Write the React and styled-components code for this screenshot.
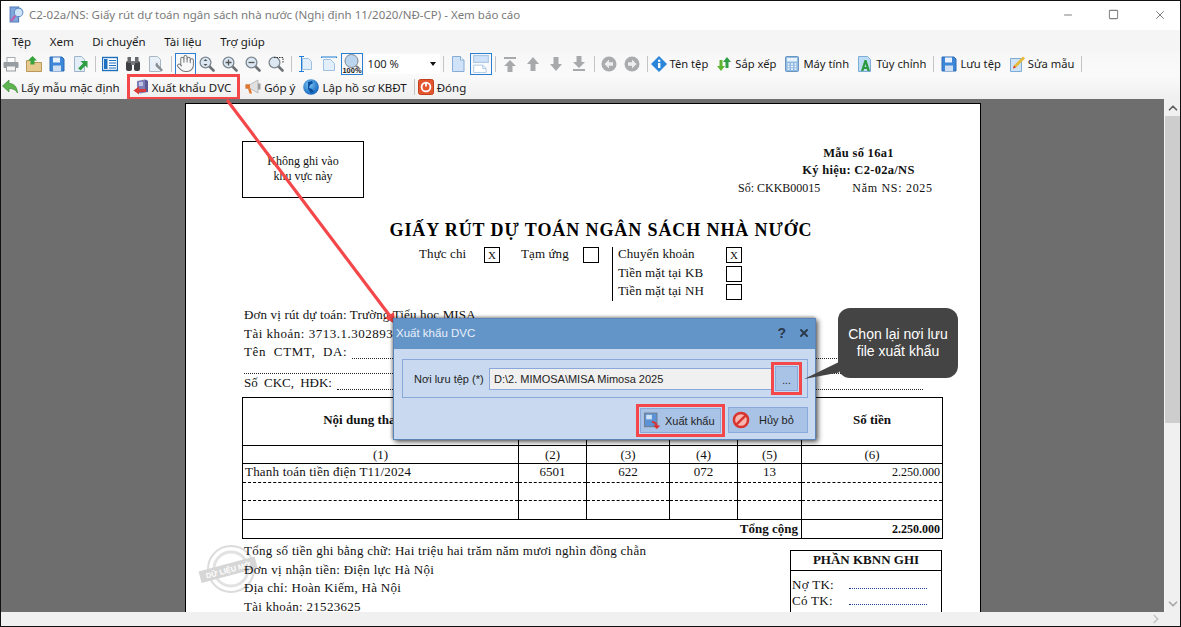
import React from 'react';
import styled, { createGlobalStyle } from 'styled-components';
import { Hand, ChevronUp, ChevronDown, ChevronRight, Minus, Square, X } from 'lucide-react';

const Svg = styled.svg.attrs((p) => ({ viewBox: p.viewBox || '0 0 16 16' }))`
  width: ${(p) => p.$size || 16}px;
  height: ${(p) => p.$size || 16}px;
  flex: none;
  display: block;
`;

const PrinterIcon = () => (
  <Svg>
    <rect x="4" y="1.500" width="8" height="5" fill="#fff" stroke="#a6abb0" />
    <rect x="0.500" y="6" width="15" height="6" rx="1" fill="#989da2" />
    <rect x="3.500" y="10" width="9" height="5" fill="#f4f4f4" stroke="#989da2" />
  </Svg>
);

const FolderUpIcon = () => (
  <Svg>
    <path d="M.5 4.500h5l1 2h9v9H.5z" fill="#e6c98c" stroke="#b9985a" />
    <path d="M6.500 0L11 4.500H8.500v4h-4v-4H2z" fill="#36a33c" />
  </Svg>
);

const SaveIcon = () => (
  <Svg>
    <path d="M1 1h12l2 2v12H1z" fill="#3d86d8" stroke="#2d6db8" />
    <rect x="4" y="1.500" width="7" height="5" fill="#eaf2fb" />
    <rect x="4" y="9.500" width="8" height="5.500" fill="#cfe0f3" />
  </Svg>
);

const ExportPageIcon = () => (
  <Svg>
    <path d="M2.500.5h7l3 3v12h-10z" fill="#e4eef8" stroke="#9db4cc" />
    <path d="M15.500 5v7l-2.200-2.200-4.800 4.800-2.300-2.300 4.800-4.800L8.500 5z" fill="#2f9e44" />
  </Svg>
);

const ListBookIcon = () => (
  <Svg>
    <rect x="0.500" y="1.500" width="15" height="13" fill="#fff" stroke="#1f6fbf" strokeWidth="1.400" />
    <rect x="2" y="3" width="3.500" height="10" fill="#1f6fbf" />
    <path d="M7 4.500h7M7 7h7M7 9.500h7M7 12h7" stroke="#1f6fbf" />
  </Svg>
);

const BinocularsIcon = () => (
  <Svg>
    <rect x="1" y="5" width="6" height="10" rx="2" fill="#3d3f42" />
    <rect x="9" y="5" width="6" height="10" rx="2" fill="#3d3f42" />
    <rect x="2.500" y="1" width="3.500" height="6" fill="#67696c" />
    <rect x="10" y="1" width="3.500" height="6" fill="#67696c" />
    <rect x="6" y="5" width="4" height="4" fill="#77797c" />
  </Svg>
);

const DocToolIcon = () => (
  <Svg>
    <path d="M1.500.5h8l3 3v12h-11z" fill="#e9f0f7" stroke="#a8b6c4" />
    <path d="M9 6.500a3 3 0 0 0-1 4l5.500 5 1.500-1.500-5-5.500a3 3 0 0 0-1-2z" fill="#8a8f94" />
  </Svg>
);

const Magnifier = ({ children }) => (
  <Svg>
    <path d="M10 10l4.500 4.500" stroke="#6f7275" strokeWidth="2.600" strokeLinecap="round" />
    <circle cx="6.500" cy="6.500" r="5.400" fill="#dbe8f3" stroke="#7d8790" strokeWidth="1.300" />
    {children}
  </Svg>
);

const FitHeightIcon = () => (
  <Svg>
    <path d="M4.500 2.500h6l3 3v8h-9z" fill="#e2eefa" stroke="#9fc0df" />
    <path d="M1 .5h5M1 15.500h5M3.500 1v14" stroke="#1c7ed6" />
  </Svg>
);

const FitWidthIcon = () => (
  <Svg>
    <path d="M2.500 3.500h7l4 4v7h-11z" fill="#e2eefa" stroke="#9fc0df" />
    <path d="M.5 2V.5M15.500 2V.5M1 1h14" stroke="#1c7ed6" />
  </Svg>
);

const ActualSizeIcon = () => (
  <Svg $size={20} viewBox="0 0 20 20">
    <circle cx="9.500" cy="7" r="6.500" fill="#bcd5ee" stroke="#7d8790" />
    <path d="M14 12l3 2" stroke="#6f7275" strokeWidth="2" />
    <text x="10" y="19" textAnchor="middle" fontSize="7.500" fontWeight="700" fontFamily="Liberation Sans, sans-serif" fill="#222">100%</text>
  </Svg>
);

const SinglePageIcon = () => (
  <Svg>
    <path d="M2.500.5h8l3.500 3.500v11.500H2.500z" fill="#cfe2f7" stroke="#88add4" />
    <path d="M10.500.5V4H14" fill="#fff" stroke="#88add4" />
  </Svg>
);

const TwoPagesIcon = () => (
  <Svg $size={18}>
    <rect x="1.500" y="0.500" width="13" height="6" fill="#cfe2f7" stroke="#a8c6e4" />
    <path d="M1.500 9h8l3 3v3.500h-11zM9.500 9v3h3" fill="#fff" stroke="#a8c6e4" strokeWidth=".8" />
  </Svg>
);

const NavArrow = ({ d }) => (
  <Svg>
    <path d={d} fill="#a7a9ab" />
  </Svg>
);

const NavCircle = ({ flip }) => (
  <Svg>
    <circle cx="8" cy="8" r="7.500" fill="#a9abad" />
    <path d={flip ? 'M8 3.500L12.500 8 8 12.500V9.800H4V6.200h4z' : 'M8 3.500L3.500 8 8 12.500V9.800h4V6.200H8z'} fill="#eee" />
  </Svg>
);

const InfoIcon = () => (
  <Svg>
    <path d="M8 0l8 8-8 8-8-8z" fill="#2b86da" />
    <rect x="7" y="7" width="2.400" height="5" fill="#fff" />
    <circle cx="8.200" cy="4.800" r="1.300" fill="#fff" />
  </Svg>
);

const SortIcon = () => (
  <Svg>
    <path d="M11 1l4 5h-2.500v6h-3V6H7z" fill="#2f9e44" />
    <path d="M5 15L1 10h2.500V4h3v6H9z" fill="#5fb530" />
  </Svg>
);

const CalculatorIcon = () => (
  <Svg>
    <rect x="1.500" y="0.500" width="13" height="15" rx="1" fill="#8fbbe4" stroke="#6a95bf" />
    <rect x="3" y="2" width="10" height="3.500" fill="#e8f3fc" />
    <path d="M3.500 8h2M7 8h2M10.500 8h2M3.500 10.500h2M7 10.500h2M10.500 10.500h2M3.500 13h2M7 13h2M10.500 13h2" stroke="#f4f4f4" strokeWidth="1.400" />
  </Svg>
);

const PageLetterIcon = () => (
  <Svg>
    <path d="M1.500.5h9l3 3v12h-12z" fill="#bddcf5" stroke="#7dadd6" />
    <path d="M4 15L7.500 4h2L13 15h-2.500l-.6-2H7l-.6 2zm3.600-4h1.700L8.500 8z" fill="#2c9a3f" />
  </Svg>
);

const PageEditIcon = () => (
  <Svg>
    <path d="M1.500 2.500h11v13h-11z" fill="#cfe3f5" stroke="#7dadd6" />
    <path d="M14 .5l2 2-9 9-3 1 1-3z" fill="#e6b93a" />
    <path d="M4 12.500l1-3 2 2z" fill="#d83b3b" />
  </Svg>
);

const UndoGreenIcon = () => (
  <Svg>
    <path d="M7 1v3.500c4.500 0 8 2.500 8.500 9.500-2-3.500-5-4.500-8.500-4.500V13L.5 7z" fill="#5cb54f" stroke="#3d8b3a" strokeWidth=".7" />
  </Svg>
);

const ExportDvcIcon = () => (
  <Svg>
    <path d="M4 2l8-1.500 3 1.500v11l-8 1.500-3-1.500z" fill="#7f7db8" />
    <path d="M12 .5l3 1.500v11l-3-.5z" fill="#5a5a94" />
    <rect x="6" y="3" width="4" height="4" fill="#bfc6e6" />
    <path d="M6 7.500v2.500h7v3H6v2.500L.5 11.500z" fill="#dc3a34" />
  </Svg>
);

const MegaphoneIcon = () => (
  <Svg>
    <path d="M1 5.500h4l8-4.500v13L5 9.500H1z" fill="#e0e0e0" stroke="#a0a0a0" strokeWidth=".6" />
    <rect x="0.500" y="5.500" width="4.500" height="4" fill="#e2762a" />
    <path d="M3 9.500l1.500 5H7l-1.500-5z" fill="#e2762a" />
    <rect x="13" y="4.500" width="2.500" height="6" fill="#9a9a9a" />
  </Svg>
);

const GlobeIcon = () => (
  <Svg>
    <defs>
      <radialGradient id="globe-fill" cx="40%" cy="35%" r="70%">
        <stop offset="0" stopColor="#7cc4f5" />
        <stop offset="1" stopColor="#0b5fb8" />
      </radialGradient>
    </defs>
    <circle cx="8" cy="8" r="7.800" fill="url(#globe-fill)" />
    <path d="M5 3l4-1 1 2-3 2-1 3 3 1 2 3-3 1-3-4z" fill="#0a4f9e" />
  </Svg>
);

const PowerIcon = () => (
  <Svg>
    <rect x="0.500" y="0.500" width="15" height="15" rx="2" fill="#e4572e" stroke="#c13f1b" />
    <circle cx="8" cy="8" r="4.400" fill="none" stroke="#fff" strokeWidth="1.800" />
    <path d="M8 3.500v4" stroke="#fff" strokeWidth="1.800" />
  </Svg>
);

const DialogExportIcon = () => (
  <Svg $size={18}>
    <rect x="0.500" y="1" width="11" height="12" fill="#5b93d6" stroke="#6e7f96" />
    <rect x="2" y="2.500" width="5" height="4" fill="#cfe3f7" />
    <path d="M7 8c3 0 5 2 5 4h2.500l-3 3-3.500-3h2c0-1.500-1.500-2.500-3-2.500z" fill="#d8332e" />
  </Svg>
);

const CancelIcon = () => (
  <Svg $size={18}>
    <circle cx="8" cy="8" r="6.300" fill="#f5b7b0" stroke="#d8352f" strokeWidth="2.200" />
    <path d="M3.800 12.200l8.400-8.400" stroke="#d8352f" strokeWidth="2.200" />
  </Svg>
);

const AppIcon = () => (
  <Svg $size={17}>
    <path d="M2 1h8v14H2z" fill="#7fa7dc" stroke="#4f79b8" />
    <circle cx="10" cy="6" r="4" fill="#cfe4f7" stroke="#5f8fc8" />
    <path d="M7 9l-4 5" stroke="#c05fa8" strokeWidth="2" />
  </Svg>
);

const Stamp = () => (
  <StampSvg viewBox="0 0 60 50">
    <circle cx="30" cy="25" r="23" fill="none" stroke="#dcdcdc" strokeWidth="2" />
    <circle cx="30" cy="25" r="17" fill="none" stroke="#e2e2e2" strokeWidth="3" />
    <g transform="rotate(-15 30 25)">
      <rect x="-2" y="19" width="58" height="12" fill="#d6d6d6" />
      <text x="27" y="28" textAnchor="middle" fontSize="7.500" fontWeight="700" fontFamily="Liberation Sans, sans-serif" fill="#fff">DỮ LIỆU MỞ</text>
    </g>
  </StampSvg>
);

const App = () => (
  <>
    <GlobalStyle />
    <Window>
      <TitleBar>
        <AppIcon />
        <TitleText>C2-02a/NS: Giấy rút dự toán ngân sách nhà nước (Nghị định 11/2020/NĐ-CP) - Xem báo cáo</TitleText>
        <WindowControls>
          <Minus size={12} strokeWidth={2} />
          <Square size={11} strokeWidth={2.200} />
          <X size={14} strokeWidth={1.700} />
        </WindowControls>
      </TitleBar>

      <MenuBar>
        <span>Tệp</span>
        <span>Xem</span>
        <span>Di chuyển</span>
        <span>Tài liệu</span>
        <span>Trợ giúp</span>
      </MenuBar>

      <MainToolbar>
        <ToolButton><PrinterIcon /></ToolButton>
        <ToolButton><FolderUpIcon /></ToolButton>
        <ToolButton><SaveIcon /></ToolButton>
        <ToolButton><ExportPageIcon /></ToolButton>
        <Separator />
        <ToolButton><ListBookIcon /></ToolButton>
        <ToolButton><BinocularsIcon /></ToolButton>
        <ToolButton><DocToolIcon /></ToolButton>
        <Separator />
        <ToolButton $active $width={21}><Hand size={19} strokeWidth={1.300} color="#77797c" /></ToolButton>
        <ToolButton>
          <Magnifier><path d="M6.500 3l2 2h-4zM6.500 10l2-2h-4z" fill="#555" /></Magnifier>
        </ToolButton>
        <ToolButton>
          <Magnifier><path d="M3.500 6.500h6M6.500 3.500v6" stroke="#555" strokeWidth="1.300" /></Magnifier>
        </ToolButton>
        <ToolButton>
          <Magnifier><path d="M3.500 6.500h6" stroke="#555" strokeWidth="1.300" /></Magnifier>
        </ToolButton>
        <ToolButton>
          <Magnifier><path d="M6 1.500h9v5" fill="none" stroke="#333" strokeDasharray="1.500 1" /></Magnifier>
        </ToolButton>
        <Separator />
        <ToolButton><FitHeightIcon /></ToolButton>
        <ToolButton><FitWidthIcon /></ToolButton>
        <ToolButton $active $width={22}><ActualSizeIcon /></ToolButton>
        <ZoomCombo>
          <span>100 %</span>
          <ComboCaret />
        </ZoomCombo>
        <Separator />
        <ToolButton><SinglePageIcon /></ToolButton>
        <ToolButton $active $width={22}><TwoPagesIcon /></ToolButton>
        <Separator />
        <ToolButton><NavArrow d="M2 1h12v2H2zM8 4l6 6h-3.500v6h-5v-6H2z" /></ToolButton>
        <ToolButton><NavArrow d="M8 1l6 7h-3.500v7h-5V8H2z" /></ToolButton>
        <ToolButton><NavArrow d="M8 15L2 8h3.500V1h5v7H14z" /></ToolButton>
        <ToolButton><NavArrow d="M2 13h12v2H2zM8 12L2 6h3.500V0h5v6H14z" /></ToolButton>
        <Separator />
        <ToolButton><NavCircle /></ToolButton>
        <ToolButton><NavCircle flip /></ToolButton>
        <Separator />
        <TextButton $shift={-4}><InfoIcon />Tên tệp</TextButton>
        <TextButton><SortIcon />Sắp xếp</TextButton>
        <TextButton><CalculatorIcon />Máy tính</TextButton>
        <TextButton><PageLetterIcon />Tùy chỉnh</TextButton>
        <Separator />
        <TextButton><SaveIcon />Lưu tệp</TextButton>
        <TextButton><PageEditIcon />Sửa mẫu</TextButton>
        <Separator />
      </MainToolbar>

      <ActionToolbar>
        <TextButton $shift={-3}><UndoGreenIcon />Lấy mẫu mặc định</TextButton>
        <HighlightButton><ExportDvcIcon />Xuất khẩu DVC</HighlightButton>
        <TextButton><MegaphoneIcon />Góp ý</TextButton>
        <TextButton><GlobeIcon />Lập hồ sơ KBĐT</TextButton>
        <Separator />
        <TextButton $shift={-4}><PowerIcon />Đóng</TextButton>
      </ActionToolbar>

      <Workspace>
        <Canvas>
          <Page>
            <Stamp />
            <HeaderRow>
              <NoteBox>Không ghi vào<br />khu vực này</NoteBox>
              <FormInfo>
                <FormLine>Mẫu số 16a1</FormLine>
                <FormLine>Ký hiệu: C2-02a/NS</FormLine>
                <FormNumbers>
                  <FormNumber>Số: CKKB00015</FormNumber>
                  <FormNumber $spacing={0.7}>Năm NS: 2025</FormNumber>
                </FormNumbers>
              </FormInfo>
            </HeaderRow>

            <DocTitle>GIẤY RÚT DỰ TOÁN NGÂN SÁCH NHÀ NƯỚC</DocTitle>

            <CheckArea>
              <CheckLabel $width={65}>Thực chi</CheckLabel>
              <CheckBox>X</CheckBox>
              <CheckLabel $width={62} $left={21}>Tạm ứng</CheckLabel>
              <CheckBox />
              <TransferGroup>
                <TransferRow><CheckLabel>Chuyển khoản</CheckLabel><CheckBox>X</CheckBox></TransferRow>
                <TransferRow><CheckLabel>Tiền mặt tại KB</CheckLabel><CheckBox /></TransferRow>
                <TransferRow><CheckLabel>Tiền mặt tại NH</CheckLabel><CheckBox /></TransferRow>
              </TransferGroup>
            </CheckArea>

            <InfoBlock>
              <InfoLine $spacing={0.15}>Đơn vị rút dự toán: Trường Tiểu học MISA</InfoLine>
              <InfoLine $spacing={0.5}>Tài khoản: 3713.1.3028932</InfoLine>
              <InfoLine $spacing={0.6} $words={4}>Tên CTMT, DA:<Dots /></InfoLine>
              <DotsOnly />
              <InfoLine $spacing={0} $words={3}>Số CKC, HĐK:<Dots /></InfoLine>
            </InfoBlock>

            <PayTable>
              <colgroup>
                <col width="276" />
                <col width="68" />
                <col width="83" />
                <col width="68" />
                <col width="64" />
                <col width="141" />
              </colgroup>
              <tbody>
                <HeadRow>
                  <HeadCell>Nội dung thanh toán</HeadCell>
                  <HeadCell />
                  <HeadCell />
                  <HeadCell />
                  <HeadCell />
                  <HeadCell>Số tiền</HeadCell>
                </HeadRow>
                <NumberRow>
                  <td>(1)</td><td>(2)</td><td>(3)</td><td>(4)</td><td>(5)</td><td>(6)</td>
                </NumberRow>
                <DataRow $height={19}>
                  <LeftCell>Thanh toán tiền điện T11/2024</LeftCell>
                  <td>6501</td><td>622</td><td>072</td><td>13</td>
                  <RightCell>2.250.000</RightCell>
                </DataRow>
                <DataRow $height={18}>
                  <td /><td /><td /><td /><td /><td />
                </DataRow>
                <DataRow $height={19} $last>
                  <td /><td /><td /><td /><td /><td />
                </DataRow>
                <TotalRow>
                  <TotalLabel colSpan={5}>Tổng cộng</TotalLabel>
                  <RightCell>2.250.000</RightCell>
                </TotalRow>
              </tbody>
            </PayTable>

            <BottomRow>
              <BottomText>
                <BottomLine>Tổng số tiền ghi bằng chữ: Hai triệu hai trăm năm mươi nghìn đồng chẵn</BottomLine>
                <BottomLine>Đơn vị nhận tiền: Điện lực Hà Nội</BottomLine>
                <BottomLine>Địa chỉ: Hoàn Kiếm, Hà Nội</BottomLine>
                <BottomLine>Tài khoản: 21523625</BottomLine>
              </BottomText>
              <TreasuryBox>
                <TreasuryHead>PHẦN KBNN GHI</TreasuryHead>
                <TreasuryLine>Nợ TK:<Leader /></TreasuryLine>
                <TreasuryLine>Có TK:<Leader /></TreasuryLine>
                <TreasuryLine>Mã TK:<Leader /></TreasuryLine>
              </TreasuryBox>
            </BottomRow>
          </Page>
        </Canvas>
        <VScroll>
          <ScrollArrow><ChevronUp size={14} strokeWidth={3} /></ScrollArrow>
          <ScrollThumb />
          <ScrollTrack />
          <ScrollArrow><ChevronDown size={14} strokeWidth={3} color="#a8a8a8" /></ScrollArrow>
        </VScroll>
      </Workspace>

      <HScroll>
        <ChevronRight size={14} strokeWidth={3} color="#c4c4c4" />
      </HScroll>

      <PointerLine viewBox="0 0 1179 625">
        <path d="M226 99L392 319" stroke="#f4474a" strokeWidth="3.200" />
        <path d="M384 317l9-6 1 12z" fill="#f4474a" />
      </PointerLine>

      <Dialog>
        <DialogTitle>
          <span>Xuất khẩu DVC</span>
          <DialogTools>
            <span>?</span>
            <X size={12} strokeWidth={4} />
          </DialogTools>
        </DialogTitle>
        <DialogBody>
          <FieldGroup>
            <FieldLabel>Nơi lưu tệp (*)</FieldLabel>
            <PathInput>D:\2. MIMOSA\MISA Mimosa 2025</PathInput>
            <BrowseButton>...</BrowseButton>
          </FieldGroup>
          <DialogActions>
            <ConfirmButton><DialogExportIcon />Xuất khẩu</ConfirmButton>
            <CancelButton><CancelIcon />Hủy bỏ</CancelButton>
          </DialogActions>
        </DialogBody>
      </Dialog>

      <Callout>Chọn lại nơi lưu<br />file xuất khẩu</Callout>
    </Window>
  </>
);

const GlobalStyle = createGlobalStyle`
  html, body {
    margin: 0;
    padding: 0;
    background: #fff;
  }
  * {
    box-sizing: border-box;
  }
`;

const Window = styled.div`
  position: relative;
  width: 1181px;
  height: 627px;
  border: 1px solid #111;
  background: #f5f5f5;
  font-family: "Noto Sans", sans-serif;
  font-size: 11.5px;
  color: #1a1a1a;
  display: flex;
  flex-direction: column;
  overflow: hidden;
`;

const TitleBar = styled.div`
  height: 29px;
  flex: none;
  background: #fff;
  display: flex;
  align-items: center;
  padding: 0 0 2px 7px;
  gap: 4px;
`;

const TitleText = styled.div`
  color: #7a7a7a;
  flex: 1;
`;

const WindowControls = styled.div`
  display: flex;
  align-items: center;
  gap: 34px;
  width: 118px;
  color: #808080;
`;

const MenuBar = styled.div`
  height: 22px;
  flex: none;
  display: flex;
  align-items: center;
  gap: 18.5px;
  padding-left: 11px;
  background: #f5f5f5;
`;

const MainToolbar = styled.div`
  height: 24px;
  flex: none;
  display: flex;
  align-items: center;
  margin-left: -1.5px;
  padding-bottom: 1px;
  font-size: 11.2px;
  background: linear-gradient(#f7f7f7, #fafafa);
`;

const ActionToolbar = styled.div`
  height: 23px;
  flex: none;
  display: flex;
  align-items: center;
  padding-bottom: 1px;
  background: linear-gradient(#fafafa, #efefef);
`;

const ToolButton = styled.div`
  width: ${(p) => p.$width || 23}px;
  height: ${(p) => (p.$active ? 22 : 23)}px;
  flex: none;
  display: flex;
  align-items: center;
  justify-content: center;
  border: 1px solid ${(p) => (p.$active ? '#2a7fd0' : 'transparent')};
`;

const Separator = styled.div`
  width: 7px;
  height: 16px;
  flex: none;
  &::before {
    content: "";
    display: block;
    width: 1px;
    height: 100%;
    margin-left: 3px;
    background: #c4c4c4;
  }
`;

const ZoomCombo = styled.div`
  width: 74px;
  height: 20px;
  flex: none;
  margin-left: 3px;
  padding: 0 4px 0 2px;
  background: #fff;
  display: flex;
  align-items: center;
  justify-content: space-between;
  color: #222;
`;

const ComboCaret = styled.i`
  border: 3.5px solid transparent;
  border-top: 4px solid #111;
  border-bottom: none;
`;

const TextButton = styled.div`
  display: flex;
  align-items: center;
  gap: 3px;
  padding: 0 4px;
  margin-left: ${(p) => p.$shift || 0}px;
  flex: none;
  white-space: nowrap;
`;

const HighlightButton = styled(TextButton)`
  margin: 0 4px 0 6px;
  padding: 0 6px 0 3px;
  height: 20px;
  outline: 3px solid #f4474a;
`;

const Workspace = styled.div`
  flex: 1;
  min-height: 0;
  display: flex;
`;

const Canvas = styled.div`
  flex: 1;
  min-width: 0;
  background: #6e6e6e;
  overflow: hidden;
  padding: 4px 0 0 184px;
  margin-right: 1px;
`;

const Page = styled.div`
  position: relative;
  isolation: isolate;
  width: 796px;
  min-height: 800px;
  background: #fff;
  border: 1px solid #000;
  padding: 37px 38px 0 56px;
  font-family: "Liberation Serif", serif;
  font-size: 13px;
  line-height: 18px;
  color: #111;
`;

const HeaderRow = styled.div`
  display: flex;
  justify-content: space-between;
  align-items: flex-start;
`;

const NoteBox = styled.div`
  width: 122px;
  height: 57px;
  border: 1px solid #000;
  padding-top: 12px;
  text-align: center;
  font-size: 12px;
  line-height: 15px;
`;

const FormInfo = styled.div`
  width: 204px;
  padding-top: 4px;
`;

const FormLine = styled.div`
  padding-left: 37px;
  text-align: center;
  font-weight: 700;
  font-size: 12.5px;
  line-height: 17px;
  letter-spacing: 0.3px;
`;

const FormNumbers = styled.div`
  display: flex;
  gap: 32px;
  font-size: 12px;
  line-height: 19px;
`;

const FormNumber = styled.span`
  letter-spacing: ${(p) => p.$spacing || 0}px;
`;

const DocTitle = styled.h1`
  margin: 21px 0 0;
  padding-left: 18px;
  text-align: center;
  font-size: 18px;
  line-height: 22px;
  letter-spacing: 0.9px;
  color: #000;
  white-space: nowrap;
`;

const CheckArea = styled.div`
  display: flex;
  align-items: flex-start;
  margin: 6px 0 0 177px;
  height: 54px;
`;

const CheckLabel = styled.span`
  width: ${(p) => (p.$width ? `${p.$width}px` : 'auto')};
  margin-left: ${(p) => p.$left || 0}px;
  margin-top: -1px;
  line-height: 15px;
  letter-spacing: 0.1px;
`;

const CheckBox = styled.span`
  width: 16px;
  height: 16px;
  flex: none;
  border: 1px solid #000;
  display: flex;
  align-items: center;
  justify-content: center;
  font-size: 11px;
  line-height: 1;
`;

const TransferGroup = styled.div`
  margin-left: 13px;
  padding-left: 5px;
  border-left: 1px solid #000;
  height: 54px;
  display: flex;
  flex-direction: column;
  gap: 2.5px;
`;

const TransferRow = styled.div`
  width: 124px;
  height: 16px;
  display: flex;
  justify-content: space-between;
  align-items: flex-start;
`;

const InfoBlock = styled.div`
  margin: 5px 0 0 2px;
  padding-right: 19px;
`;

const InfoLine = styled.div`
  display: flex;
  height: 18.5px;
  align-items: center;
  gap: 5px;
  letter-spacing: ${(p) => p.$spacing}px;
  word-spacing: ${(p) => p.$words || 0}px;
  white-space: nowrap;
`;

const Dots = styled.span`
  flex: 1;
  height: 8px;
  margin-top: 6px;
  border-bottom: 1px dotted #222;
`;

const DotsOnly = styled.div`
  height: 12px;
  border-bottom: 1px dotted #222;
`;

const PayTable = styled.table`
  width: 700px;
  table-layout: fixed;
  border-collapse: collapse;
  margin-top: 5px;
  text-align: center;
  line-height: 16px;
  td, th {
    padding: 0;
    border: 1px solid #000;
  }
`;

const HeadRow = styled.tr`
  height: 48px;
`;

const HeadCell = styled.th`
  font-size: 13px;
  padding-bottom: 4px !important;
`;

const NumberRow = styled.tr`
  height: 18px;
  td {
    padding-bottom: 1px;
    line-height: 15px;
  }
`;

const DataRow = styled.tr`
  height: ${(p) => p.$height}px;
  td {
    border-top: none;
    border-bottom: ${(p) => (p.$last ? '1px solid #000' : '1px dashed #000')};
    vertical-align: top;
  }
`;

const LeftCell = styled.td`
  text-align: left;
  padding-left: 2px !important;
  letter-spacing: 0.2px;
`;

const RightCell = styled.td`
  text-align: right;
  padding-right: 2px !important;
  font-size: 12px;
`;

const TotalRow = styled.tr`
  height: 19px;
  font-weight: 700;
`;

const TotalLabel = styled.td`
  text-align: right;
  padding-right: 3px !important;
`;

const BottomRow = styled.div`
  display: flex;
  justify-content: space-between;
  align-items: flex-start;
  margin-top: 3px;
`;

const BottomText = styled.div`
  padding-left: 2px;
`;

const BottomLine = styled.div`
  height: 18.5px;
  letter-spacing: 0.3px;
`;

const TreasuryBox = styled.div`
  width: 152px;
  margin-top: 8px;
  border: 1px solid #000;
  height: 100px;
`;

const TreasuryHead = styled.div`
  height: 20px;
  border-bottom: 1px solid #000;
  text-align: center;
  font-weight: 700;
  margin-bottom: 5px;
`;

const TreasuryLine = styled.div`
  display: grid;
  grid-template-columns: 57px 78px;
  height: 16px;
  align-items: center;
  padding-left: 1px;
  letter-spacing: 0.3px;
`;

const Leader = styled.span`
  height: 7px;
  border-bottom: 1px dotted #1d3f8f;
`;

const StampSvg = styled.svg`
  position: absolute;
  z-index: -1;
  left: 15px;
  top: 440px;
  width: 60px;
  height: 50px;
  overflow: visible;
`;

const VScroll = styled.div`
  width: 15px;
  flex: none;
  background: #f0f0f0;
  display: flex;
  flex-direction: column;
`;

const ScrollArrow = styled.div`
  height: 17px;
  flex: none;
  display: flex;
  align-items: center;
  justify-content: center;
  color: #606060;
`;

const ScrollThumb = styled.div`
  height: 307px;
  flex: none;
  background: #cdcdcd;
`;

const ScrollTrack = styled.div`
  flex: 1;
`;

const HScroll = styled.div`
  height: 14px;
  flex: none;
  background: #f0f0f0;
  display: flex;
  align-items: center;
  justify-content: flex-end;
  padding-right: 17px;
`;

const PointerLine = styled.svg`
  position: absolute;
  left: 0;
  top: 0;
  width: 1179px;
  height: 625px;
  pointer-events: none;
`;

const Dialog = styled.div`
  position: absolute;
  left: 392px;
  top: 317px;
  width: 423px;
  height: 122px;
  border: 1px solid #5b84b8;
  background: #c9daf0;
  box-shadow: 2px 2px 5px rgba(0, 0, 0, 0.65), -1px -1px 3px rgba(0, 0, 0, 0.35);
  font-family: "Liberation Sans", sans-serif;
  font-size: 11px;
  display: flex;
  flex-direction: column;
`;

const DialogTitle = styled.div`
  height: 30px;
  flex: none;
  background: #6495c9;
  color: #e8f0f9;
  font-size: 11.5px;
  display: flex;
  align-items: center;
  justify-content: space-between;
  padding: 0 5px 2px 2px;
`;

const DialogTools = styled.div`
  display: flex;
  align-items: center;
  gap: 12px;
  color: #2b3a4c;
  font-weight: 700;
  font-size: 14px;
`;

const DialogBody = styled.div`
  flex: 1;
  padding: 10px 7px 0 8px;
`;

const FieldGroup = styled.div`
  height: 39px;
  border: 1px solid #8ba8da;
  display: flex;
  align-items: center;
  padding-left: 11px;
`;

const FieldLabel = styled.span`
  width: 75px;
  flex: none;
  color: #222;
  white-space: nowrap;
`;

const PathInput = styled.div`
  width: 283px;
  height: 22px;
  flex: none;
  background: #f0f0f0;
  border: 1px solid #8ba8da;
  padding-left: 4px;
  line-height: 20px;
  color: #222;
`;

const BrowseButton = styled.div`
  width: 23px;
  height: 25px;
  flex: none;
  margin-left: 3px;
  background: #a9c3e6;
  border: 1px solid #8ba8da;
  outline: 3px solid #f4474a;
  outline-offset: 1px;
  text-align: center;
  line-height: 28px;
  font-size: 10px;
`;

const DialogActions = styled.div`
  display: flex;
  justify-content: flex-end;
  gap: 7px;
  margin-top: 9px;
`;

const CancelButton = styled.div`
  width: 80px;
  height: 26px;
  background: #a9c3e6;
  border: 1px solid #8ba8da;
  display: flex;
  align-items: center;
  padding-left: 3px;
  gap: 9px;
  color: #222;
  white-space: nowrap;
`;

const ConfirmButton = styled(CancelButton)`
  width: 81px;
  height: 25px;
  margin-top: 1px;
  gap: 3px;
  outline: 3px solid #f4474a;
  outline-offset: 1px;
`;

const Callout = styled.div`
  position: absolute;
  left: 837px;
  top: 307px;
  width: 120px;
  height: 70px;
  border-radius: 12px;
  background: #444;
  color: #fff;
  font-family: "Liberation Sans", sans-serif;
  font-size: 14px;
  line-height: 17px;
  text-align: center;
  padding-top: 18px;
  &::before {
    content: "";
    position: absolute;
    left: -34px;
    top: 54px;
    width: 35px;
    height: 17px;
    background: #444;
    clip-path: polygon(100% 0, 100% 62%, 0 100%);
  }
`;

export default App;
